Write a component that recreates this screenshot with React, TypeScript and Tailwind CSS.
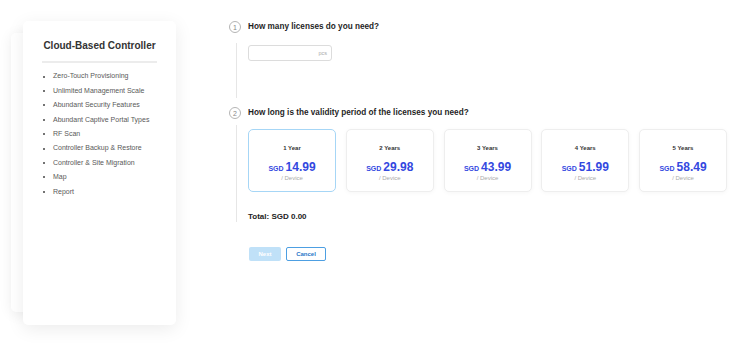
import React, { useState } from 'react';

const features = [
  'Zero-Touch Provisioning',
  'Unlimited Management Scale',
  'Abundant Security Features',
  'Abundant Captive Portal Types',
  'RF Scan',
  'Controller Backup & Restore',
  'Controller & Site Migration',
  'Map',
  'Report',
];

const plans = [
  { label: '1 Year', price: '14.99' },
  { label: '2 Years', price: '29.98' },
  { label: '3 Years', price: '43.99' },
  { label: '4 Years', price: '51.99' },
  { label: '5 Years', price: '58.49' },
];

const StepHeader: React.FC<{ n: number; title: string }> = ({ n, title }) => (
  <div className="flex items-center gap-[7px] h-[12px]">
    <div className="w-[12px] h-[12px] rounded-full border border-[#b5b5b5] flex items-center justify-center text-[7px] leading-none text-[#888]">
      {n}
    </div>
    <h3 className="text-[8.2px] font-bold text-[#1f1f1f] leading-none">{title}</h3>
  </div>
);

export default function App() {
  const [selected, setSelected] = useState(0);
  const [qty, setQty] = useState('');

  return (
    <div className="w-[737px] h-[343px] bg-white flex overflow-hidden font-['Liberation_Sans',Arial,sans-serif]">
      {/* feature card */}
      <div className="relative w-[206px] shrink-0 pt-[21px] pl-[23px]">
        <div className="absolute left-[11px] top-[33px] w-[150px] h-[279px] bg-white rounded-[5px] shadow-[0_2px_14px_rgba(0,0,0,0.07)]" />
        <div className="relative w-[153px] h-[304px] bg-white rounded-[5px] shadow-[0_4px_18px_rgba(0,0,0,0.08)] px-[19px] pt-[19px]">
          <h2 className="text-[10px] font-bold text-[#333] text-center leading-[12px]">Cloud-Based Controller</h2>
          <div className="mt-[9px] h-[1.5px] bg-[#ececec]" />
          <ul className="mt-[7px]">
            {features.map((f) => (
              <li key={f} className="flex items-center h-[14.4px] text-[7px] text-[#595959]">
                <span className="w-[2px] h-[2px] rounded-full bg-[#444] ml-[1px] mr-[8px]" />
                {f}
              </li>
            ))}
          </ul>
        </div>
      </div>

      {/* order form */}
      <div className="pt-[21px] pl-[23px]">
        <StepHeader n={1} title="How many licenses do you need?" />
        <div className="ml-[7px] mt-[10px] h-[55px] border-l border-[#e6e6e6] pl-[11px] pt-[2px]">
          <div className="w-[84px] h-[16px] border border-[#dcdcdc] rounded-[3px] flex items-center pr-[4px]">
            <input
              value={qty}
              onChange={(e) => setQty(e.target.value)}
              className="flex-1 min-w-0 h-full bg-transparent outline-none text-[7px] px-[4px]"
            />
            <span className="text-[5.5px] text-[#aaa]">pcs</span>
          </div>
        </div>

        <div className="mt-[9px]">
          <StepHeader n={2} title="How long is the validity period of the licenses you need?" />
        </div>
        <div className="ml-[7px] mt-[6px] border-l border-[#e6e6e6] pl-[11px] pt-[4px]">
          <div className="flex gap-[9.75px]">
            {plans.map((p, i) => (
              <button
                key={p.label}
                onClick={() => setSelected(i)}
                className={`w-[88px] h-[63px] rounded-[5px] bg-white flex flex-col items-center pt-[14px] ${
                  i === selected
                    ? 'border-[1.5px] border-[#a6d6f6]'
                    : 'border border-[#eeeeee] shadow-[0_1px_4px_rgba(0,0,0,0.04)]'
                }`}
              >
                <span className="text-[6px] font-bold text-[#333] leading-[8px]">{p.label}</span>
                <span className="mt-[8px] flex items-baseline gap-[2px] text-[#3348df] font-bold leading-[14px] h-[14px]">
                  <span className="text-[7px]">SGD</span>
                  <span className="text-[12px]">{p.price}</span>
                </span>
                <span className="text-[6px] text-[#aaa] leading-[8px]">/ Device</span>
              </button>
            ))}
          </div>
          <p className="mt-[20px] text-[8px] font-bold text-[#222] leading-[10px]">Total: SGD 0.00</p>
        </div>

        <div className="ml-[20px] mt-[25px] flex gap-[5px]">
          <button disabled className="w-[32px] h-[14px] rounded-[2px] bg-[#c0e1f8] text-white text-[6px] font-bold">
            Next
          </button>
          <button className="w-[40px] h-[14px] rounded-[2px] border border-[#4d9fe2] bg-white text-[#2a78c8] text-[6px] font-bold">
            Cancel
          </button>
        </div>
      </div>
    </div>
  );
}
